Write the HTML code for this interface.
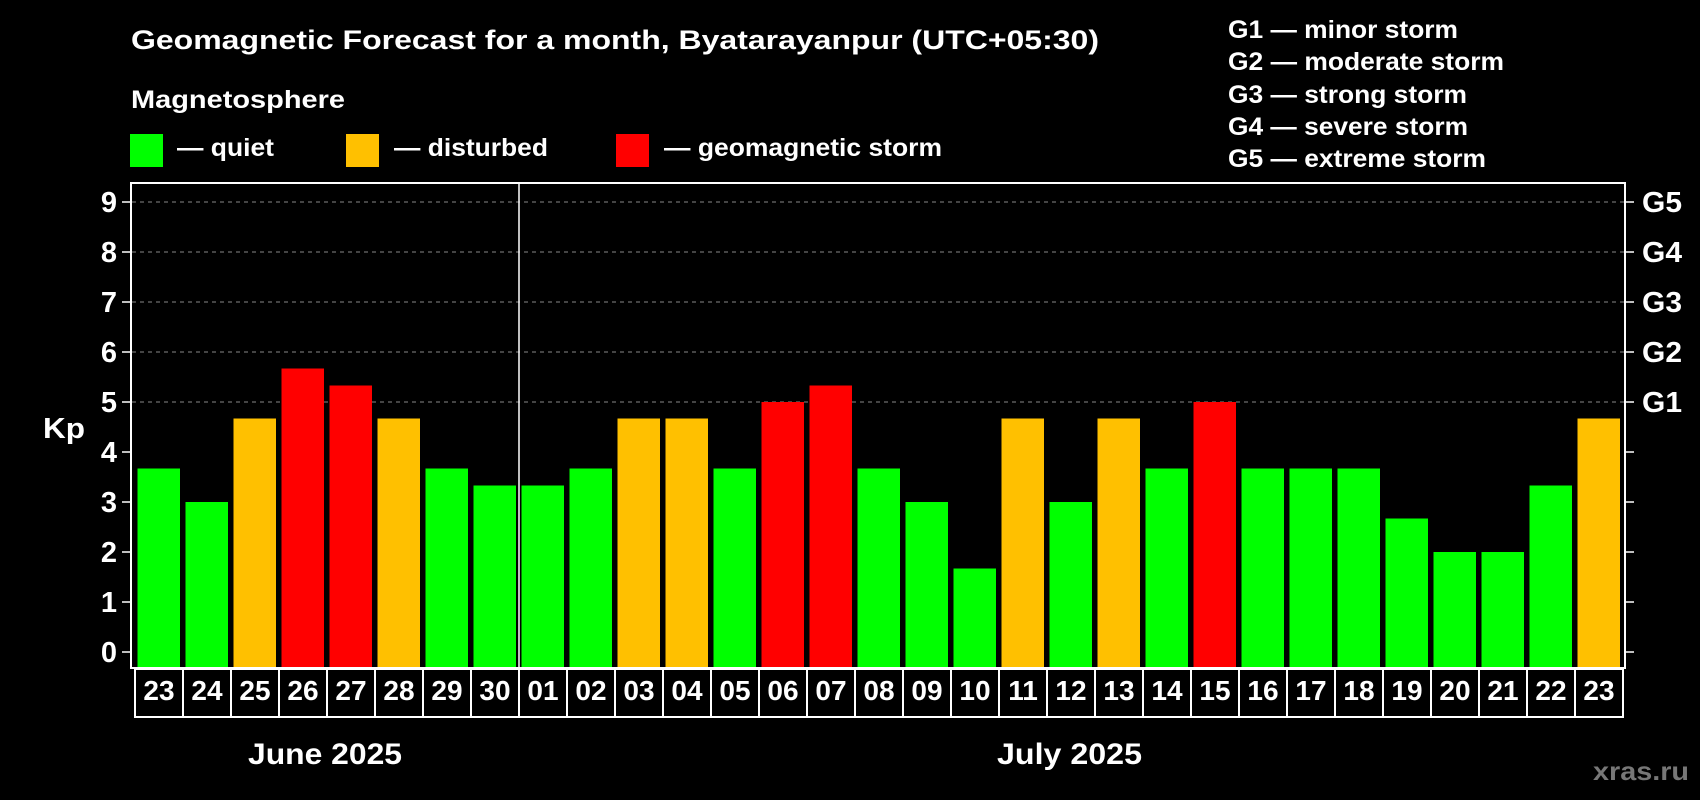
<!DOCTYPE html>
<html><head><meta charset="utf-8"><style>
html,body{margin:0;padding:0;background:#000;width:1700px;height:800px;overflow:hidden}
svg{display:block}
text{font-family:"Liberation Sans",Arial,sans-serif;font-weight:bold;fill:#fff}
</style></head><body>
<svg width="1700" height="800" xmlns="http://www.w3.org/2000/svg">
<rect width="1700" height="800" fill="#000"/>
<text x="131" y="49" font-size="27" textLength="968" lengthAdjust="spacingAndGlyphs">Geomagnetic Forecast for a month, Byatarayanpur (UTC+05:30)</text>
<text x="131" y="108" font-size="25" textLength="214" lengthAdjust="spacingAndGlyphs">Magnetosphere</text>
<rect x="130" y="134" width="33" height="33" fill="#00ff00"/>
<text x="177" y="156" font-size="25" textLength="97" lengthAdjust="spacingAndGlyphs">— quiet</text>
<rect x="346" y="134" width="33" height="33" fill="#ffc000"/>
<text x="394" y="156" font-size="25" textLength="154" lengthAdjust="spacingAndGlyphs">— disturbed</text>
<rect x="616" y="134" width="33" height="33" fill="#ff0000"/>
<text x="664" y="156" font-size="25" textLength="278" lengthAdjust="spacingAndGlyphs">— geomagnetic storm</text>
<g font-size="25">
<text x="1228" y="38" textLength="230" lengthAdjust="spacingAndGlyphs">G1 — minor storm</text>
<text x="1228" y="70" textLength="276" lengthAdjust="spacingAndGlyphs">G2 — moderate storm</text>
<text x="1228" y="103" textLength="239" lengthAdjust="spacingAndGlyphs">G3 — strong storm</text>
<text x="1228" y="135" textLength="240" lengthAdjust="spacingAndGlyphs">G4 — severe storm</text>
<text x="1228" y="167" textLength="258" lengthAdjust="spacingAndGlyphs">G5 — extreme storm</text>
</g>
<g stroke="#888" stroke-width="1" stroke-dasharray="4,4">
<line x1="132" y1="202" x2="1624" y2="202"/>
<line x1="132" y1="252" x2="1624" y2="252"/>
<line x1="132" y1="302" x2="1624" y2="302"/>
<line x1="132" y1="352" x2="1624" y2="352"/>
<line x1="132" y1="402" x2="1624" y2="402"/>
</g>
<g>
<rect x="137.5" y="468.5" width="42.5" height="199.5" fill="#00ff00"/>
<rect x="185.5" y="502" width="42.5" height="166" fill="#00ff00"/>
<rect x="233.5" y="418.5" width="42.5" height="249.5" fill="#ffc000"/>
<rect x="281.5" y="368.5" width="42.5" height="299.5" fill="#ff0000"/>
<rect x="329.5" y="385.5" width="42.5" height="282.5" fill="#ff0000"/>
<rect x="377.5" y="418.5" width="42.5" height="249.5" fill="#ffc000"/>
<rect x="425.5" y="468.5" width="42.5" height="199.5" fill="#00ff00"/>
<rect x="473.5" y="485.5" width="42.5" height="182.5" fill="#00ff00"/>
<rect x="521.5" y="485.5" width="42.5" height="182.5" fill="#00ff00"/>
<rect x="569.5" y="468.5" width="42.5" height="199.5" fill="#00ff00"/>
<rect x="617.5" y="418.5" width="42.5" height="249.5" fill="#ffc000"/>
<rect x="665.5" y="418.5" width="42.5" height="249.5" fill="#ffc000"/>
<rect x="713.5" y="468.5" width="42.5" height="199.5" fill="#00ff00"/>
<rect x="761.5" y="402" width="42.5" height="266" fill="#ff0000"/>
<rect x="809.5" y="385.5" width="42.5" height="282.5" fill="#ff0000"/>
<rect x="857.5" y="468.5" width="42.5" height="199.5" fill="#00ff00"/>
<rect x="905.5" y="502" width="42.5" height="166" fill="#00ff00"/>
<rect x="953.5" y="568.5" width="42.5" height="99.5" fill="#00ff00"/>
<rect x="1001.5" y="418.5" width="42.5" height="249.5" fill="#ffc000"/>
<rect x="1049.5" y="502" width="42.5" height="166" fill="#00ff00"/>
<rect x="1097.5" y="418.5" width="42.5" height="249.5" fill="#ffc000"/>
<rect x="1145.5" y="468.5" width="42.5" height="199.5" fill="#00ff00"/>
<rect x="1193.5" y="402" width="42.5" height="266" fill="#ff0000"/>
<rect x="1241.5" y="468.5" width="42.5" height="199.5" fill="#00ff00"/>
<rect x="1289.5" y="468.5" width="42.5" height="199.5" fill="#00ff00"/>
<rect x="1337.5" y="468.5" width="42.5" height="199.5" fill="#00ff00"/>
<rect x="1385.5" y="518.5" width="42.5" height="149.5" fill="#00ff00"/>
<rect x="1433.5" y="552" width="42.5" height="116" fill="#00ff00"/>
<rect x="1481.5" y="552" width="42.5" height="116" fill="#00ff00"/>
<rect x="1529.5" y="485.5" width="42.5" height="182.5" fill="#00ff00"/>
<rect x="1577.5" y="418.5" width="42.5" height="249.5" fill="#ffc000"/>
</g>
<line x1="519" y1="183" x2="519" y2="668" stroke="#fff" stroke-width="1.5"/>
<rect x="131" y="183" width="1494" height="485" fill="none" stroke="#fff" stroke-width="2"/>
<g stroke="#fff" stroke-width="1.5">
<line x1="122" y1="652" x2="131" y2="652"/><line x1="1625" y1="652" x2="1634" y2="652"/>
<line x1="122" y1="602" x2="131" y2="602"/><line x1="1625" y1="602" x2="1634" y2="602"/>
<line x1="122" y1="552" x2="131" y2="552"/><line x1="1625" y1="552" x2="1634" y2="552"/>
<line x1="122" y1="502" x2="131" y2="502"/><line x1="1625" y1="502" x2="1634" y2="502"/>
<line x1="122" y1="452" x2="131" y2="452"/><line x1="1625" y1="452" x2="1634" y2="452"/>
<line x1="122" y1="402" x2="131" y2="402"/><line x1="1625" y1="402" x2="1634" y2="402"/>
<line x1="122" y1="352" x2="131" y2="352"/><line x1="1625" y1="352" x2="1634" y2="352"/>
<line x1="122" y1="302" x2="131" y2="302"/><line x1="1625" y1="302" x2="1634" y2="302"/>
<line x1="122" y1="252" x2="131" y2="252"/><line x1="1625" y1="252" x2="1634" y2="252"/>
<line x1="122" y1="202" x2="131" y2="202"/><line x1="1625" y1="202" x2="1634" y2="202"/>
</g>
<g font-size="29" text-anchor="end">
<text x="117" y="662">0</text><text x="117" y="612">1</text><text x="117" y="562">2</text>
<text x="117" y="512">3</text><text x="117" y="462">4</text><text x="117" y="412">5</text>
<text x="117" y="362">6</text><text x="117" y="312">7</text><text x="117" y="262">8</text>
<text x="117" y="212">9</text>
</g>
<g font-size="29">
<text x="1642" y="212" textLength="40" lengthAdjust="spacingAndGlyphs">G5</text>
<text x="1642" y="262" textLength="40" lengthAdjust="spacingAndGlyphs">G4</text>
<text x="1642" y="312" textLength="40" lengthAdjust="spacingAndGlyphs">G3</text>
<text x="1642" y="362" textLength="40" lengthAdjust="spacingAndGlyphs">G2</text>
<text x="1642" y="412" textLength="40" lengthAdjust="spacingAndGlyphs">G1</text>
</g>
<text x="43" y="438" font-size="29" textLength="42" lengthAdjust="spacingAndGlyphs">Kp</text>
<g fill="none" stroke="#fff" stroke-width="2">
<rect x="135" y="669" width="1488" height="48"/>
<line x1="183" y1="669" x2="183" y2="717"/><line x1="231" y1="669" x2="231" y2="717"/>
<line x1="279" y1="669" x2="279" y2="717"/><line x1="327" y1="669" x2="327" y2="717"/>
<line x1="375" y1="669" x2="375" y2="717"/><line x1="423" y1="669" x2="423" y2="717"/>
<line x1="471" y1="669" x2="471" y2="717"/><line x1="519" y1="669" x2="519" y2="717"/>
<line x1="567" y1="669" x2="567" y2="717"/><line x1="615" y1="669" x2="615" y2="717"/>
<line x1="663" y1="669" x2="663" y2="717"/><line x1="711" y1="669" x2="711" y2="717"/>
<line x1="759" y1="669" x2="759" y2="717"/><line x1="807" y1="669" x2="807" y2="717"/>
<line x1="855" y1="669" x2="855" y2="717"/><line x1="903" y1="669" x2="903" y2="717"/>
<line x1="951" y1="669" x2="951" y2="717"/><line x1="999" y1="669" x2="999" y2="717"/>
<line x1="1047" y1="669" x2="1047" y2="717"/><line x1="1095" y1="669" x2="1095" y2="717"/>
<line x1="1143" y1="669" x2="1143" y2="717"/><line x1="1191" y1="669" x2="1191" y2="717"/>
<line x1="1239" y1="669" x2="1239" y2="717"/><line x1="1287" y1="669" x2="1287" y2="717"/>
<line x1="1335" y1="669" x2="1335" y2="717"/><line x1="1383" y1="669" x2="1383" y2="717"/>
<line x1="1431" y1="669" x2="1431" y2="717"/><line x1="1479" y1="669" x2="1479" y2="717"/>
<line x1="1527" y1="669" x2="1527" y2="717"/><line x1="1575" y1="669" x2="1575" y2="717"/>
</g>
<g font-size="28" text-anchor="middle">
<text x="159" y="700">23</text><text x="207" y="700">24</text><text x="255" y="700">25</text>
<text x="303" y="700">26</text><text x="351" y="700">27</text><text x="399" y="700">28</text>
<text x="447" y="700">29</text><text x="495" y="700">30</text><text x="543" y="700">01</text>
<text x="591" y="700">02</text><text x="639" y="700">03</text><text x="687" y="700">04</text>
<text x="735" y="700">05</text><text x="783" y="700">06</text><text x="831" y="700">07</text>
<text x="879" y="700">08</text><text x="927" y="700">09</text><text x="975" y="700">10</text>
<text x="1023" y="700">11</text><text x="1071" y="700">12</text><text x="1119" y="700">13</text>
<text x="1167" y="700">14</text><text x="1215" y="700">15</text><text x="1263" y="700">16</text>
<text x="1311" y="700">17</text><text x="1359" y="700">18</text><text x="1407" y="700">19</text>
<text x="1455" y="700">20</text><text x="1503" y="700">21</text><text x="1551" y="700">22</text>
<text x="1599" y="700">23</text>
</g>
<text x="248" y="764" font-size="30" textLength="154" lengthAdjust="spacingAndGlyphs">June 2025</text>
<text x="997" y="764" font-size="30" textLength="145" lengthAdjust="spacingAndGlyphs">July 2025</text>
<text x="1593" y="780" font-size="26" textLength="96" lengthAdjust="spacingAndGlyphs" style="fill:#777">xras.ru</text>
</svg>
</body></html>
